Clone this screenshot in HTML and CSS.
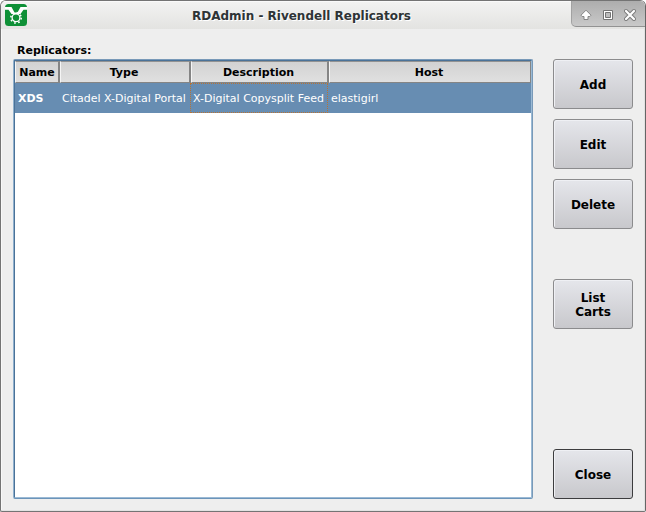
FILE: index.html
```html
<!DOCTYPE html>
<html lang="en">
<head>
<meta charset="utf-8">
<title>RDAdmin - Rivendell Replicators</title>
<link rel="stylesheet" href="styles.css">
</head>
<body>
<div class="window">
  <header class="titlebar">
    <svg class="logo" width="22" height="22" viewBox="0 0 22 22">
      <rect width="22" height="22" rx="3.500" fill="#0e9036"/>
      <path d="M0 3H6.500L9.500 8.500H12.500L15.500 3H22V5.800H18.500L15.500 10H6.500L3.500 5.800H0Z" fill="#fff"/>
      <circle cx="11" cy="13.800" r="5.200" fill="none" stroke="#fff" stroke-width="1.600" stroke-dasharray="1.700 2.384"/>
      <circle cx="11" cy="13.800" r="3.900" fill="#0e9036" stroke="#fff" stroke-width="1.300"/>
    </svg>
    <h1 class="title">RDAdmin - Rivendell Replicators</h1>
    <div class="controls">
      <svg width="75" height="27" viewBox="0 0 75 27">
        <path d="M15 9.200L20 14.200L18.800 15.500H17V18.500H13V15.500H11.200L10 14.200Z" fill="#fff" stroke="#858585" stroke-linejoin="round"/>
        <path d="M32.500 9.500H41.500V18.500H32.500Z" fill="#fff" stroke="#747474"/>
        <path d="M34.500 11.500H39.500V16.500H34.500Z" fill="#bcbcbc" stroke="#747474"/>
        <path d="M55 10L63 18M63 10L55 18" stroke="#7b7b7b" stroke-width="4" stroke-linecap="round"/>
        <path d="M55 10L63 18M63 10L55 18" stroke="#fff" stroke-width="2.200" stroke-linecap="round"/>
      </svg>
    </div>
  </header>
  <main class="content">
    <section class="list-pane">
      <h2 class="label">Replicators:</h2>
      <div class="list">
        <div class="view">
          <div class="row head">
            <div>Name</div><div>Type</div><div>Description</div><div>Host</div>
          </div>
          <div class="row selected">
            <div class="name">XDS</div><div>Citadel X-Digital Portal</div><div class="focused">X-Digital Copysplit Feed</div><div>elastigirl</div>
          </div>
        </div>
      </div>
    </section>
    <nav class="actions">
      <button>Add</button>
      <button>Edit</button>
      <button>Delete</button>
      <button class="carts">List<br>Carts</button>
      <button class="close">Close</button>
    </nav>
  </main>
</div>
</body>
</html>
```

FILE: styles.css
```css
* { box-sizing: border-box; }
html { background: #fff; }
body {
  margin: 0;
  font-family: "DejaVu Sans", sans-serif;
  font-size: 11px;
  color: #000;
}
.window {
  width: 646px;
  height: 512px;
  border: 1px solid #747474;
  border-right-color: #656565;
  border-radius: 6px 6px 2px 2px;
  background: #eee;
  box-shadow: inset -1px -1px #e2e2e2, inset 1px 0 #f8f8f8;
  overflow: hidden;
}
.titlebar {
  display: flex;
  height: 28px;
  padding-left: 4px;
  background: linear-gradient(#f3f3f2, #e3e3e1);
  box-shadow: inset 0 1px #fafafa;
}
.logo { margin-top: 3px; }
.title {
  flex: 1;
  margin: 0;
  padding-left: 5px;
  font-size: 12px;
  line-height: 30px;
  text-align: center;
  color: #2e3436;
  text-shadow: 1px 1px #fff;
}
.controls {
  width: 74px;
  height: 26px;
  border-left: 1px solid #a2a2a2;
  border-bottom: 1px solid #929292;
  border-radius: 0 0 0 5px;
  background: linear-gradient(#adadad, #c9c9c9);
}
.controls svg { display: block; margin-left: -1px; }
.content {
  display: flex;
  gap: 20px;
  padding: 14px 12px 0;
}
.list-pane { width: 520px; }
.label {
  margin: 0;
  height: 16px;
  padding-left: 4px;
  font-size: 11px;
  line-height: 16px;
}
.list {
  height: 440px;
  border: 1px solid;
  border-color: #7899b8 #7899b8 #6b94b9 #8fb0cd;
  border-radius: 2px;
  background: #fff;
}
.view {
  height: 438px;
  border: 1px solid;
  border-color: #4a7298 #9bbad5 #9bbad5 #4a7298;
}
.row {
  display: grid;
  white-space: nowrap;
}
.head {
  grid-template-columns: 45px 131px 138px 202px;
  height: 22px;
  font-weight: bold;
  line-height: 21px;
  text-align: center;
}
.head div {
  height: 22px;
  border: 1px solid;
  border-color: #929292 #858585 #858585 #f5f5f5;
  border-right-width: 2px;
  background: linear-gradient(#d2d2d2, #e0e0e0);
}
.head div + div { padding-right: 2px; }
.head div:last-child { border-right-width: 1px; }
.selected {
  grid-template-columns: 44px 131px 138px 203px;
  height: 30px;
  background: #678db2;
  color: #fff;
  line-height: 31px;
}
.selected div { height: 30px; padding-left: 3px; }
.selected .name { font-weight: bold; }
.selected .focused {
  border: 1px dotted #b87333;
  padding-left: 2px;
  line-height: 29px;
}
.actions {
  display: flex;
  flex-direction: column;
  gap: 10px;
  padding-top: 16px;
}
.actions button {
  width: 80px;
  height: 50px;
  padding: 2px 0 0;
  border: 1px solid #8b8b8d;
  border-radius: 3px;
  background: linear-gradient(#e5e6eb, #c8c8cc);
  box-shadow: inset 1px 1px #eff0f4;
  font: bold 12px/14px "DejaVu Sans", sans-serif;
  color: #000;
}
.actions .carts { margin-top: 40px; }
.actions .close {
  margin-top: 110px;
  border-color: #3c3c3e;
}
```
